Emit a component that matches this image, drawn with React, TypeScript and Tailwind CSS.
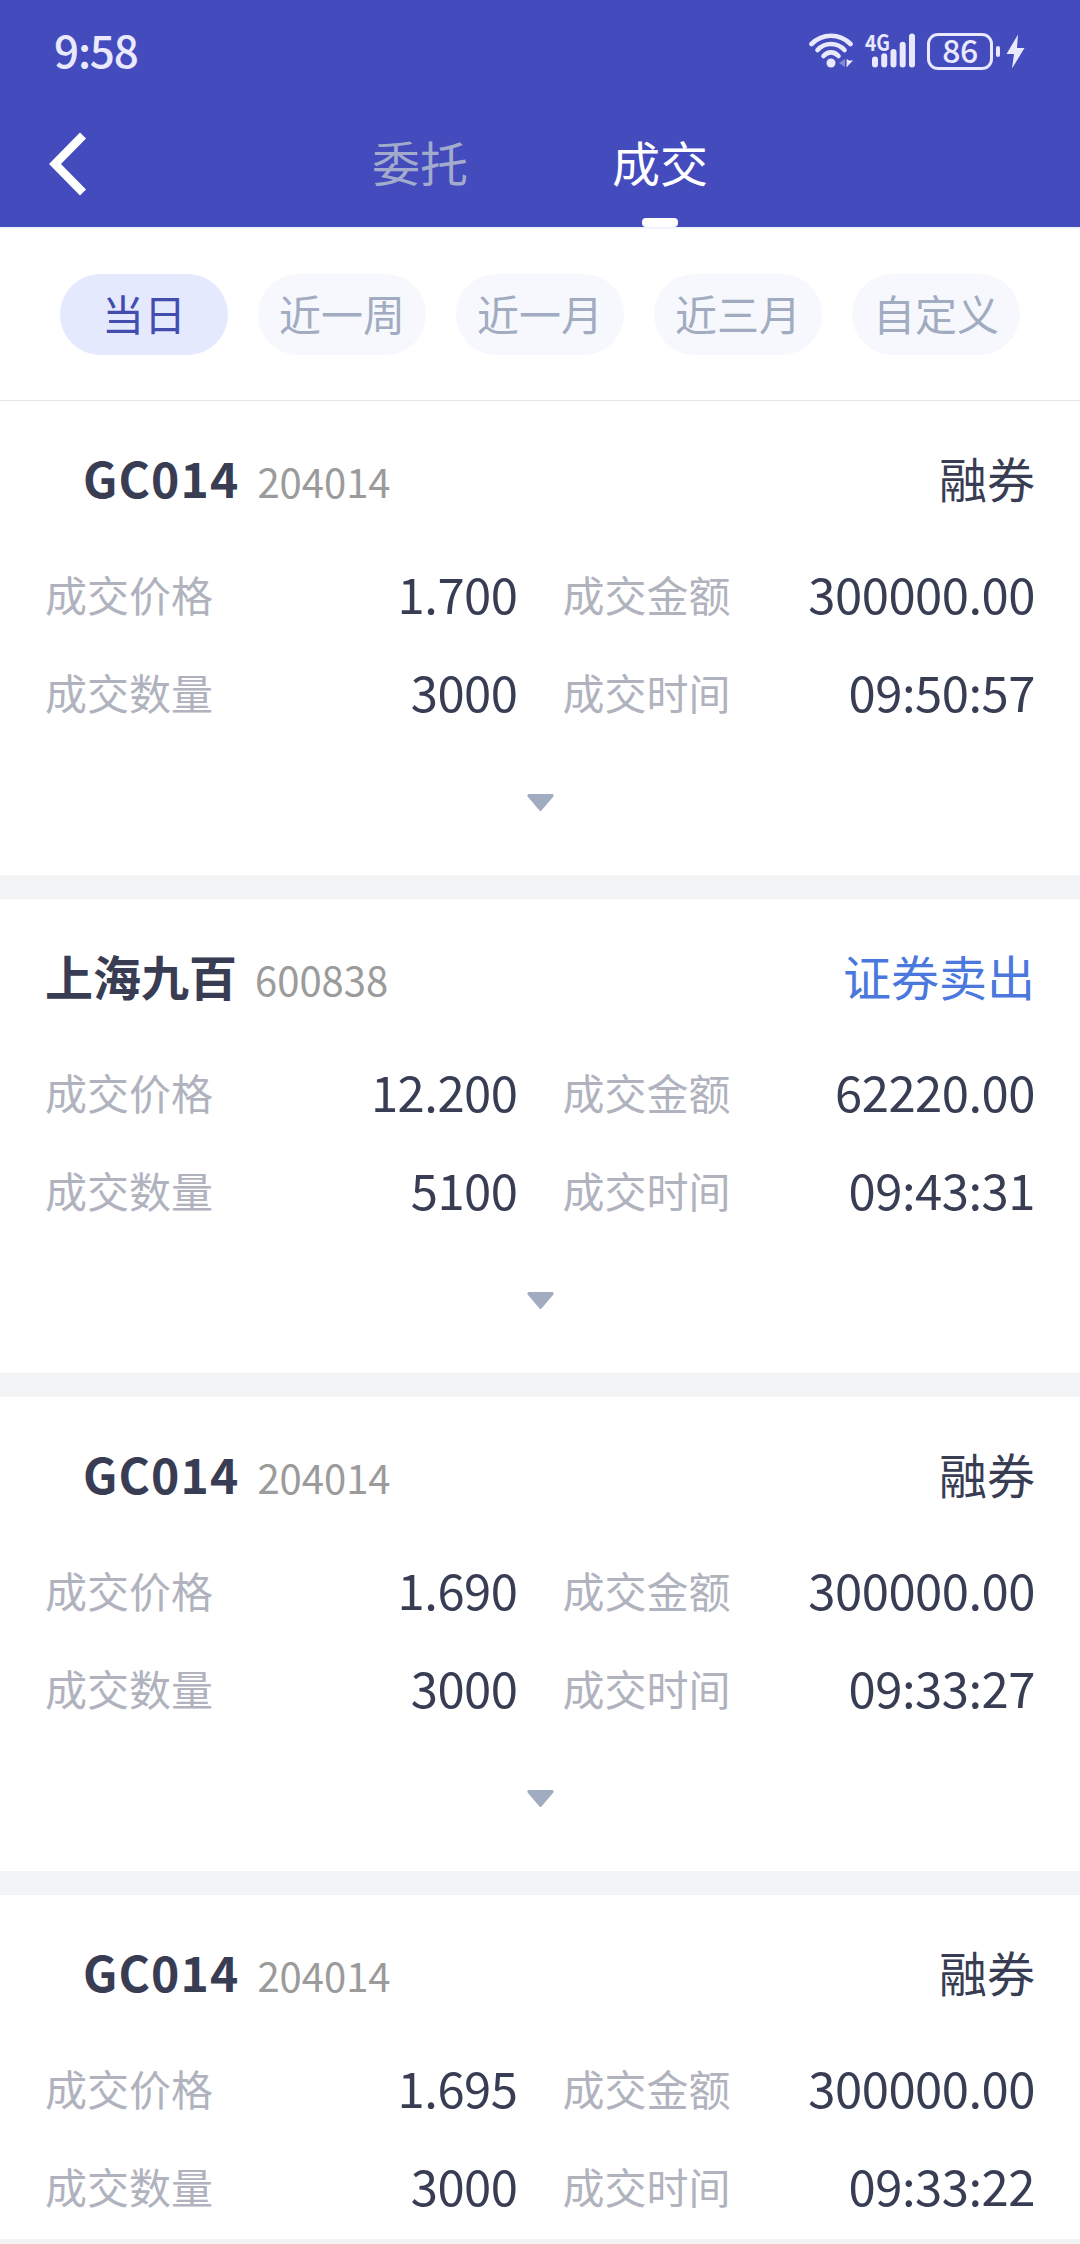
import { useState } from 'react';

type Trade = {
    name: string;
    code: string;
    side: string;
    sell?: boolean;
    price: string;
    amount: string;
    quantity: string;
    time: string;
};

const trades: Trade[] = [
    { name: 'GC014', code: '204014', side: '融券', price: '1.700', amount: '300000.00', quantity: '3000', time: '09:50:57' },
    { name: '上海九百', code: '600838', side: '证券卖出', sell: true, price: '12.200', amount: '62220.00', quantity: '5100', time: '09:43:31' },
    { name: 'GC014', code: '204014', side: '融券', price: '1.690', amount: '300000.00', quantity: '3000', time: '09:33:27' },
    { name: 'GC014', code: '204014', side: '融券', price: '1.695', amount: '300000.00', quantity: '3000', time: '09:33:22' },
];

const ranges = ['当日', '近一周', '近一月', '近三月', '自定义'];

function StatusBar() {
    return (
        <div className="h-[102px] flex items-center justify-between pl-[54px] pr-[55px] text-[#e9e8fd]">
            <span className="text-[44px] leading-[60px] font-medium tracking-[-1.2px] pb-[4px]">9:58</span>
            <div className="flex items-center">
                {/* Wi-Fi */}
                <svg className="w-[46px] h-[36px]" viewBox="0 0 46 36" fill="none" stroke="currentColor" strokeWidth="4.6" strokeLinecap="round">
                    <path d="M2.500 11C13.500 0 30.500 0 41.500 11" />
                    <path d="M8.500 17C16 9 28 9 35.500 17" />
                    <path d="M14.500 23C19 18.200 25 18.200 29.500 23" />
                    <circle cx="22" cy="30" r="4.5" fill="currentColor" stroke="none" />
                    <path d="M36 26v8l-6-4z" fill="currentColor" stroke="none" opacity=".4" />
                    <path d="M37.600 26v8.500l3-3.500l3.500-3.500h-4z" fill="currentColor" stroke="none" />
                </svg>
                {/* Mobile signal */}
                <svg className="w-[52px] h-[36px] ml-[10px] overflow-visible" viewBox="0 0 52 36">
                    <text x="0" y="17.500" fontSize="22" fontWeight="700" textLength="25" lengthAdjust="spacingAndGlyphs" fill="currentColor">4G</text>
                    <g stroke="currentColor" strokeWidth="6" strokeLinecap="round">
                        <path d="M10 26.500v5M19.200 23.300v8.200M28.500 19v12.500M37.700 11.700v19.800M47 3.500v28" />
                    </g>
                </svg>
                <div className="ml-[10px] w-[66px] h-[37px] rounded-[11px] border-[3px] border-current flex items-center justify-center">
                    <span className="text-[32px] leading-[32px] font-medium tracking-[-0.5px] pb-[5px]">86</span>
                </div>
                <span className="ml-[3px] w-[4px] h-[11px] rounded-[2px] bg-current" />
                <svg className="ml-[6px] w-[19px] h-[35px]" viewBox="0 0 19 35" fill="currentColor">
                    <path d="M12 .5L.5 20H8L6 34.500L18.500 14H11z" />
                </svg>
            </div>
        </div>
    );
}

function Field({ label, value }: { label: string; value: string }) {
    return (
        <div className="flex items-center justify-between h-[98px]">
            <span className="text-[42px] pb-[5px] text-[#b0b3be]">{label}</span>
            <span className="text-[49px] tracking-[-0.5px] pb-[8px] text-[#383d54]">{value}</span>
        </div>
    );
}

function TradeCard({ trade }: { trade: Trade }) {
    const latin = /^[A-Z]/.test(trade.name);

    return (
        <section className="h-[474px] shrink-0 bg-white px-[45px] pt-[29px]">
            <div className="flex items-center justify-between h-[98px] mb-[19px]">
                <div className={`flex items-baseline pb-[5px] ${latin ? 'pl-[38px] gap-[18px]' : 'gap-[18px]'}`}>
                    <span className={`text-[48px] font-bold text-[#383d54] ${latin ? 'tracking-[1.1px]' : ''}`}>{trade.name}</span>
                    <span className="text-[40px] text-[#9b9b9b]">{trade.code}</span>
                </div>
                <span className={`text-[48px] pb-[5px] ${trade.sell ? 'text-[#4a78dc]' : 'text-[#383d54]'}`}>{trade.side}</span>
            </div>
            <div className="grid grid-cols-2 gap-x-[45px]">
                <Field label="成交价格" value={trade.price} />
                <Field label="成交金额" value={trade.amount} />
                <Field label="成交数量" value={trade.quantity} />
                <Field label="成交时间" value={trade.time} />
            </div>
            <button className="block mx-auto mt-[51px]">
                <svg className="w-[27px] h-[17px]" viewBox="0 0 27 17" fill="#a2acc0">
                    <path d="M1.500 0h24q2 1 .7 2.800L14.500 16.400q-1 1-2 0L.8 2.800Q-.5 1 1.500 0z" />
                </svg>
            </button>
        </section>
    );
}

export default function App() {
    const [tab, setTab] = useState('成交');
    const [range, setRange] = useState('当日');

    return (
        <div className="w-[1080px] h-[2244px] overflow-hidden flex flex-col bg-[#f3f4f6] font-['Noto_Sans_CJK_SC',sans-serif] leading-none">
            <header className="h-[227px] shrink-0 bg-[#444cbd]">
                <StatusBar />
                <div className="h-[125px] grid grid-cols-[300px_240px_240px_300px]">
                    <button className="pl-[49px] pb-[2px]">
                        <svg className="w-[38px] h-[64px]" viewBox="0 0 38 64" fill="none" stroke="#fff" strokeWidth="8.500">
                            <path d="M34 3.500L6 32L34 60.500" />
                        </svg>
                    </button>
                    {['委托', '成交'].map((t) => (
                        <button
                            key={t}
                            onClick={() => setTab(t)}
                            className={`flex flex-col items-center text-[48px] ${tab === t ? 'text-white' : 'text-[#a2abcc]'}`}
                        >
                            <span className="h-[116px] pt-[35px]">{t}</span>
                            {tab === t && <span className="w-[36px] h-[9px] rounded-[4px] bg-white" />}
                        </button>
                    ))}
                </div>
            </header>

            <nav className="h-[174px] shrink-0 bg-white border-t-2 border-t-[#f1f4fd] border-b border-b-[#e5e5e5] flex gap-[30px] px-[60px] pt-[45px]">
                {ranges.map((r) => (
                    <button
                        key={r}
                        onClick={() => setRange(r)}
                        className={`w-[168px] h-[81px] pb-[3px] rounded-full text-[42px] ${range === r ? 'bg-[#e4e9fe] text-[#444cae]' : 'bg-[#f6f8fd] text-[#a2acc0]'}`}
                    >
                        {r}
                    </button>
                ))}
            </nav>

            <main className="h-[1838px] shrink-0 overflow-hidden flex flex-col gap-[24px]">
                {trades.map((trade) => (
                    <TradeCard key={trade.time} trade={trade} />
                ))}
            </main>
            <footer className="h-[5px] shrink-0 bg-[#f3f3f3]" />
        </div>
    );
}
